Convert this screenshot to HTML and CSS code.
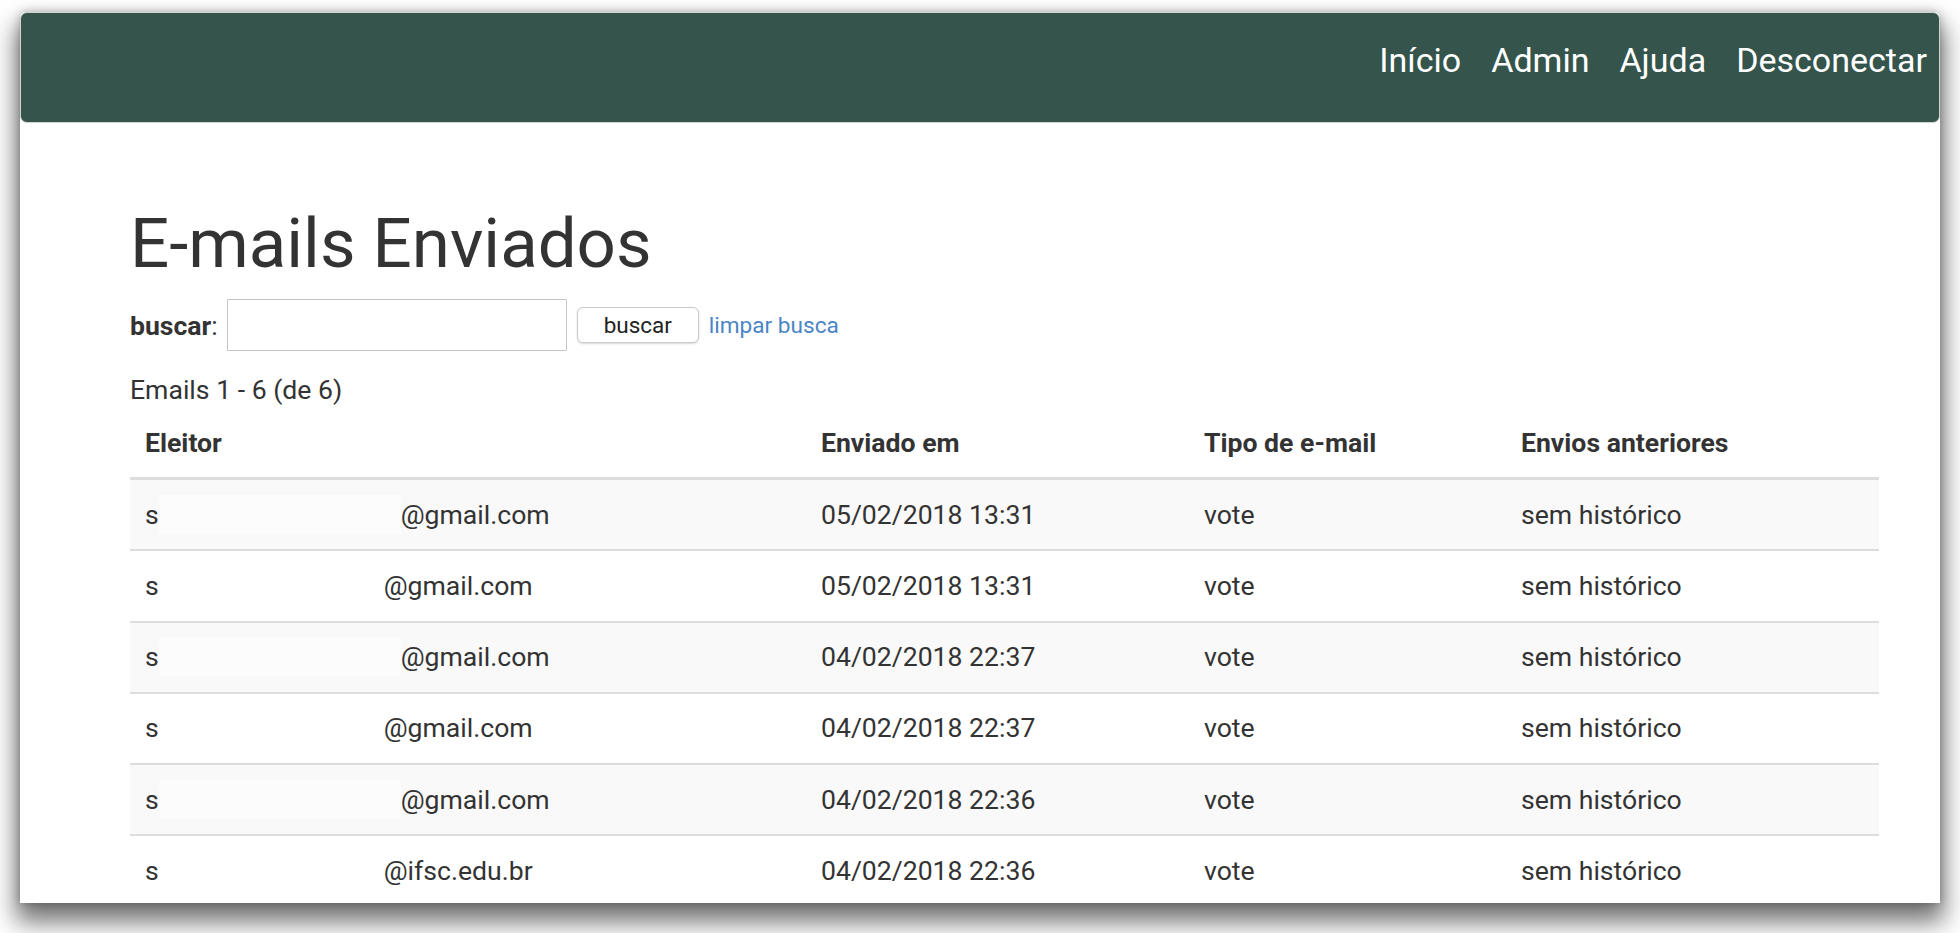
FILE: index.html
```html
<!DOCTYPE html>
<html lang="pt-BR">
<head>
<meta charset="utf-8">
<title>E-mails Enviados</title>
<link rel="stylesheet" href="styles.css">
</head>
<body>
<div class="window">
  <nav class="navbar">
    <ul class="nav">
      <li><a href="#">Início</a></li>
      <li><a href="#">Admin</a></li>
      <li><a href="#">Ajuda</a></li>
      <li><a href="#">Desconectar</a></li>
    </ul>
  </nav>
  <main class="content">
    <h1 class="title">E-mails Enviados</h1>
    <form class="search">
      <label class="search-label"><strong>buscar</strong>:</label>
      <input class="search-input" type="text">
      <button class="search-btn" type="button">buscar</button>
      <a class="clear-link" href="#">limpar busca</a>
    </form>
    <p class="count">Emails 1 - 6 (de 6)</p>
    <table class="table">
      <thead>
        <tr>
          <th class="c1">Eleitor</th>
          <th class="c2">Enviado em</th>
          <th class="c3">Tipo de e-mail</th>
          <th class="c4">Envios anteriores</th>
        </tr>
      </thead>
      <tbody>
        <tr class="odd">
          <td>s<span class="mask mask-wide"></span>@gmail.com</td>
          <td>05/02/2018 13:31</td>
          <td>vote</td>
          <td>sem histórico</td>
        </tr>
        <tr>
          <td>s<span class="mask"></span>@gmail.com</td>
          <td>05/02/2018 13:31</td>
          <td>vote</td>
          <td>sem histórico</td>
        </tr>
        <tr class="odd">
          <td>s<span class="mask mask-wide"></span>@gmail.com</td>
          <td>04/02/2018 22:37</td>
          <td>vote</td>
          <td>sem histórico</td>
        </tr>
        <tr>
          <td>s<span class="mask"></span>@gmail.com</td>
          <td>04/02/2018 22:37</td>
          <td>vote</td>
          <td>sem histórico</td>
        </tr>
        <tr class="odd">
          <td>s<span class="mask mask-wide"></span>@gmail.com</td>
          <td>04/02/2018 22:36</td>
          <td>vote</td>
          <td>sem histórico</td>
        </tr>
        <tr>
          <td>s<span class="mask"></span>@ifsc.edu.br</td>
          <td>04/02/2018 22:36</td>
          <td>vote</td>
          <td>sem histórico</td>
        </tr>
      </tbody>
    </table>
  </main>
</div>
</body>
</html>
```
FILE: styles.css
```css
html, body {
  margin: 0;
  padding: 0;
  background: #ffffff;
}

body {
  font-family: Roboto, "Liberation Sans", Arial, sans-serif;
  color: #333333;
  overflow: hidden;
  height: 933px;
}

.window {
  margin: 12px 0 0 20px;
  width: 1920px;
  height: 891px;
  overflow: hidden;
  background: #ffffff;
  border-radius: 6px 6px 0 0;
  box-shadow: 0 15px 24px 4px rgba(0, 0, 0, 0.55), 0 0 9px rgba(0, 0, 0, 0.25);
}

.navbar {
  box-sizing: border-box;
  height: 111px;
  background: #34544c;
  border: 1px solid #cfd3d2;
  border-radius: 7px;
  display: flex;
  justify-content: flex-end;
  align-items: flex-start;
  padding: 27px 12px 0 0;
}

.nav {
  list-style: none;
  margin: 0;
  padding: 0;
  display: flex;
  gap: 30px;
}

.nav a {
  color: #ffffff;
  text-decoration: none;
  font-size: 34px;
  line-height: 40px;
  display: block;
}

.content {
  padding-left: 110px;
}

.title {
  margin: 83px 0 0 0;
  font-size: 69px;
  line-height: 75px;
  font-weight: 400;
  color: #333333;
}

.search {
  margin: 18px 0 0 0;
  height: 52px;
  display: flex;
  align-items: center;
  font-size: 26.6px;
}

.search-label {
  color: #333333;
  margin-right: 9px;
}

.search-label strong {
  font-weight: 700;
}

.search-input {
  box-sizing: border-box;
  width: 340px;
  height: 52px;
  border: 1px solid #c4c4c4;
  border-radius: 1px;
  margin: 0;
  padding: 0 10px;
  background: #fff;
}

.search-btn {
  box-sizing: border-box;
  margin-left: 10px;
  width: 122px;
  height: 36px;
  border: 1px solid #cbcbcb;
  border-radius: 6px;
  background: #ffffff;
  box-shadow: 0 1px 2px rgba(0, 0, 0, 0.16);
  font-family: Roboto, "Liberation Sans", Arial, sans-serif;
  font-size: 22.5px;
  color: #222222;
  padding: 0;
  line-height: 34px;
}

.clear-link {
  margin-left: 10px;
  font-size: 22.6px;
  color: #4a85c6;
  text-decoration: none;
}

.count {
  margin: 20px 0 0 0;
  font-size: 26.6px;
  line-height: 38px;
}

.table {
  width: 1749px;
  table-layout: fixed;
  border-collapse: collapse;
  font-size: 26.6px;
  line-height: 38px;
  color: #333333;
}

.table th {
  text-align: left;
  font-weight: 700;
  padding: 15px 15px 15px 15px;
  border-bottom: 3px solid #dddddd;
}

.c1 { width: 646px; }
.c2 { width: 353px; }
.c3 { width: 287px; }
.c4 { width: 343px; }

.table td {
  padding: 15.5px 15px 15.75px 15px;
  border-top: 2px solid #dddddd;
  white-space: nowrap;
}

.table tr.odd td {
  background: #f9f9f9;
}

.mask {
  display: inline-block;
  vertical-align: top;
  width: 225px;
  height: 39px;
  margin-top: -1px;
  background: transparent;
}

.mask-wide {
  width: 242px;
  background: #fcfcfd;
}
```
